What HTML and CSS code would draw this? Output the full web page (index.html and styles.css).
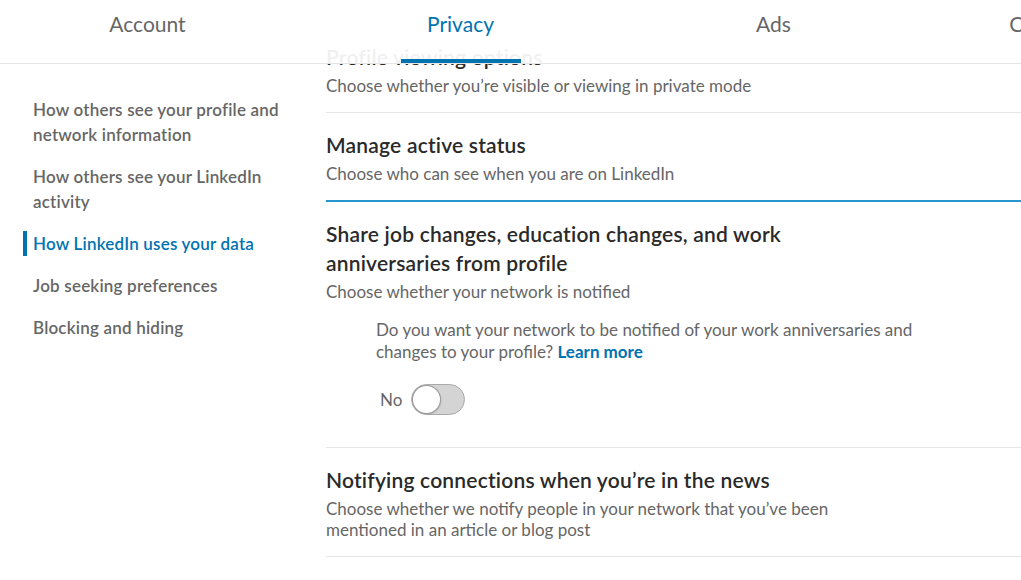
FILE: index.html
```html
<!DOCTYPE html>
<html>
<head>
<meta charset="utf-8">
<link rel="stylesheet" href="styles.css">
</head>
<body>
<header class="topbar">
  <nav class="tabs">
    <div class="tab"><span class="tab-label">Account</span></div>
    <div class="tab tab-active"><span class="tab-label">Privacy</span><span class="tab-bar"></span></div>
    <div class="tab"><span class="tab-label">Ads</span></div>
    <div class="tab"><span class="tab-label">Communications</span></div>
  </nav>
</header>
<div class="page">
  <aside class="sidenav">
    <a class="nav-item">How others see your profile and network information</a>
    <a class="nav-item">How others see your LinkedIn activity</a>
    <a class="nav-item nav-active">How LinkedIn uses your data</a>
    <a class="nav-item">Job seeking preferences</a>
    <a class="nav-item">Blocking and hiding</a>
  </aside>
  <main class="content">
    <section class="setting">
      <h3 class="setting-title">Profile viewing options</h3>
      <p class="setting-desc">Choose whether you’re visible or viewing in private mode</p>
    </section>
    <section class="setting">
      <h3 class="setting-title">Manage active status</h3>
      <p class="setting-desc">Choose who can see when you are on LinkedIn</p>
    </section>
    <section class="setting setting-open">
      <h3 class="setting-title title-narrow">Share job changes, education changes, and work anniversaries from profile</h3>
      <p class="setting-desc">Choose whether your network is notified</p>
      <div class="setting-body">
        <p class="question">Do you want your network to be notified of your work anniversaries and changes to your profile? <a class="learn">Learn more</a></p>
        <div class="toggle-row">
          <span class="toggle-label">No</span>
          <span class="toggle"><span class="knob"></span></span>
        </div>
      </div>
    </section>
    <section class="setting">
      <h3 class="setting-title">Notifying connections when you’re in the news</h3>
      <p class="setting-desc desc-narrow">Choose whether we notify people in your network that you’ve been mentioned in an article or blog post</p>
    </section>
  </main>
</div>
</body>
</html>
```

FILE: styles.css
```css
* { box-sizing: border-box; }
html, body { margin: 0; padding: 0; }
body {
  width: 1021px;
  height: 580px;
  overflow: hidden;
  background: #fff;
  font-family: Lato, "Noto Sans", sans-serif;
  position: relative;
}
.topbar {
  position: absolute;
  top: 0;
  left: 0;
  width: 1021px;
  height: 64px;
  background: rgba(255,255,255,0.93);
  border-bottom: 1px solid #e5e5e5;
  z-index: 5;
  overflow: hidden;
}
.tabs {
  display: flex;
  margin-left: -9px;
  height: 63px;
}
.tab {
  flex: 0 0 313px;
  display: flex;
  flex-direction: column;
  align-items: center;
  height: 63px;
}
.tab-label {
  margin-top: 10px;
  font-size: 21px;
  line-height: 28px;
  color: #666;
  white-space: nowrap;
}
.tab-active .tab-label { color: #0073b1; }
.tab-bar {
  display: block;
  flex: 0 0 4px;
  margin-top: auto;
  width: 120px;
  min-width: 120px;
  height: 4px;
  background: #0073b1;
}
.page {
  display: flex;
}
.sidenav {
  flex: 0 0 326px;
  padding: 97px 30px 0 23px;
  display: flex;
  flex-direction: column;
  gap: 17px;
}
.nav-item {
  display: block;
  border-left: 4px solid transparent;
  padding-left: 6px;
  font-size: 17px;
  font-weight: 600;
  letter-spacing: 0.2px;
  line-height: 25px;
  color: #666;
}
.nav-active {
  color: #0073b1;
  border-left-color: #0073b1;
}
.content {
  flex: 1;
  padding-top: 25px;
}
.setting {
  padding: 17px 0 16px;
  border-bottom: 1px solid #e6e6e6;
}
.setting-open {
  border-top: 2px solid #2496cd;
  margin-top: -1px;
  padding-bottom: 33px;
}
.setting-title {
  margin: 0;
  font-size: 21px;
  font-weight: 600;
  letter-spacing: 0.2px;
  line-height: 29px;
  color: #2a2a2a;
}
.title-narrow { max-width: 490px; }
.setting-desc {
  margin: 4px 0 0;
  font-size: 17px;
  line-height: 21px;
  color: #666;
}
.desc-narrow { max-width: 530px; }
.setting-body {
  padding-left: 50px;
  margin-top: 17px;
}
.question {
  margin: 0;
  max-width: 560px;
  font-size: 17px;
  line-height: 22px;
  color: #666;
}
.learn {
  color: #0073b1;
  font-weight: 700;
}
.toggle-row {
  display: flex;
  align-items: center;
  gap: 9px;
  margin-top: 21px;
  height: 30px;
}
.toggle-label {
  font-size: 17px;
  color: #666;
  padding-left: 4px;
}
.toggle {
  display: flex;
  align-items: center;
  width: 54px;
  height: 31px;
  border-radius: 16px;
  background: #d4d4d4;
  border: 1px solid #aaa;
  padding: 1px;
}
.knob {
  width: 27px;
  height: 27px;
  border-radius: 50%;
  background: #fff;
  box-shadow: 0 0 0 1px #999, 1px 1px 2px rgba(0,0,0,0.2);
}
```
